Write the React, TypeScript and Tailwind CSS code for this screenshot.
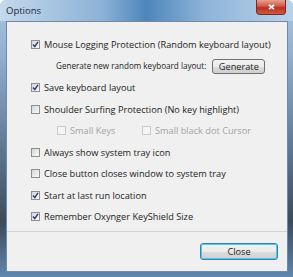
import { useState } from 'react';

type Opt = { label: string; checked: boolean; disabled?: boolean };

function Check({ checked, disabled }: { checked: boolean; disabled?: boolean }) {
  return (
    <span
      className={
        'relative flex h-[9px] w-[9px] shrink-0 items-center justify-center border ' +
        (disabled
          ? 'border-[#cacaca] bg-[#f4f4f4]'
          : 'border-[#8e8f8f] bg-gradient-to-br from-[#d6d6d6] to-[#fbfbfb]')
      }
    >
      {checked && (
        <svg width="7" height="7" viewBox="0 0 7 7">
          <path d="M1 3.6 L2.8 5.6 L6 0.9" fill="none" stroke="#2b3d6b" strokeWidth="1.5" />
        </svg>
      )}
    </span>
  );
}

function Row({ opt, onToggle, inline }: { opt: Opt; onToggle: () => void; inline?: boolean }) {
  return (
    <button
      type="button"
      onClick={onToggle}
      className={
        'flex h-[21.5px] items-center gap-[4px] whitespace-nowrap text-left ' + (inline ? '' : 'pl-[24px]')
      }
    >
      <Check checked={opt.checked} disabled={opt.disabled} />
      <span className={opt.disabled ? 'text-[#a3a3a3]' : 'text-[#222]'}>{opt.label}</span>
    </button>
  );
}

export default function App() {
  const [opts, setOpts] = useState<Opt[]>([
    { label: 'Mouse Logging Protection (Random keyboard layout)', checked: true },
    { label: 'Save keyboard layout', checked: true },
    { label: 'Shoulder Surfing Protection (No key highlight)', checked: false },
    { label: 'Small Keys', checked: false, disabled: true },
    { label: 'Small black dot Cursor', checked: false, disabled: true },
    { label: 'Always show system tray icon', checked: false },
    { label: 'Close button closes window to system tray', checked: false },
    { label: 'Start at last run location', checked: true },
    { label: 'Remember Oxynger KeyShield Size', checked: true },
  ]);

  const toggle = (i: number) => {
    if (opts[i].disabled) return;
    setOpts(opts.map((o, j) => (j === i ? { ...o, checked: !o.checked } : o)));
  };

  return (
    <div
      className="flex h-[277px] w-[293px] flex-col rounded-t-[6px] bg-[linear-gradient(180deg,#a9c7e2_0%,#8fb0cf_20%,#5d7690_55%,#3c4b5c_80%,#5f87ad_100%)] text-[9.2px] leading-none"
      style={{ fontFamily: '"Open Sans", "Noto Sans", sans-serif' }}
    >
      {/* Title bar */}
      <div className="relative flex h-[21px] shrink-0 items-center rounded-t-[6px] bg-[linear-gradient(90deg,#c4d9ec_0%,#8cb2d6_35%,#4d86bb_50%,#8eb4d8_70%,#b9d2ea_100%)] pl-[6px]">
        <span className="text-[9.5px] text-[#1b2a3a]">Options</span>
        <div className="absolute right-[7px] top-0 flex h-[15px] w-[30px] items-center justify-center rounded-b-[4px] border border-t-0 border-[#7a2a20] bg-[linear-gradient(180deg,#e8a08f_0%,#d1574a_45%,#b8301f_55%,#d2593f_100%)]">
          <svg width="7" height="6" viewBox="0 0 7 6">
            <path d="M1 0.8 L6 5.2 M6 0.8 L1 5.2" stroke="#fff" strokeWidth="1.7" />
          </svg>
        </div>
      </div>

      {/* Client */}
      <div className="mb-[5px] ml-[6px] mr-[5px] flex flex-1 flex-col border border-[#6f8aa6] bg-[#f0f0f0]">
        <div className="flex flex-1 flex-col pt-[12px]">
          <Row opt={opts[0]} onToggle={() => toggle(0)} />
          <div className="flex h-[21.5px] items-center whitespace-nowrap pl-[49px]">
            <span className="text-[8.1px] text-[#222]">Generate new random keyboard layout:</span>
            <button
              type="button"
              className="ml-[6px] flex h-[15px] w-[53px] items-center justify-center rounded-[3px] border border-[#707070] bg-[linear-gradient(180deg,#f2f2f2_0%,#ebebeb_50%,#dddddd_51%,#cfcfcf_100%)] text-[#222]"
            >
              Generate
            </button>
          </div>
          <Row opt={opts[1]} onToggle={() => toggle(1)} />
          <Row opt={opts[2]} onToggle={() => toggle(2)} />
          <div className="flex h-[21.5px] items-center pl-[50px]">
            <div className="w-[85px]">
              <Row opt={opts[3]} onToggle={() => toggle(3)} inline />
            </div>
            <Row opt={opts[4]} onToggle={() => toggle(4)} inline />
          </div>
          <Row opt={opts[5]} onToggle={() => toggle(5)} />
          <Row opt={opts[6]} onToggle={() => toggle(6)} />
          <Row opt={opts[7]} onToggle={() => toggle(7)} />
          <Row opt={opts[8]} onToggle={() => toggle(8)} />
        </div>
        <div className="flex h-[40px] shrink-0 items-center justify-end border-t border-[#d5d5d5] pr-[9px]">
          <button
            type="button"
            className="flex h-[17px] w-[78px] items-center justify-center rounded-[3px] border border-[#3c7fb1] bg-[linear-gradient(180deg,#f2f2f2_0%,#ebebeb_50%,#dddddd_51%,#cfcfcf_100%)] text-[#222] shadow-[inset_0_0_0_1px_#48cbf0]"
          >
            Close
          </button>
        </div>
      </div>
    </div>
  );
}
